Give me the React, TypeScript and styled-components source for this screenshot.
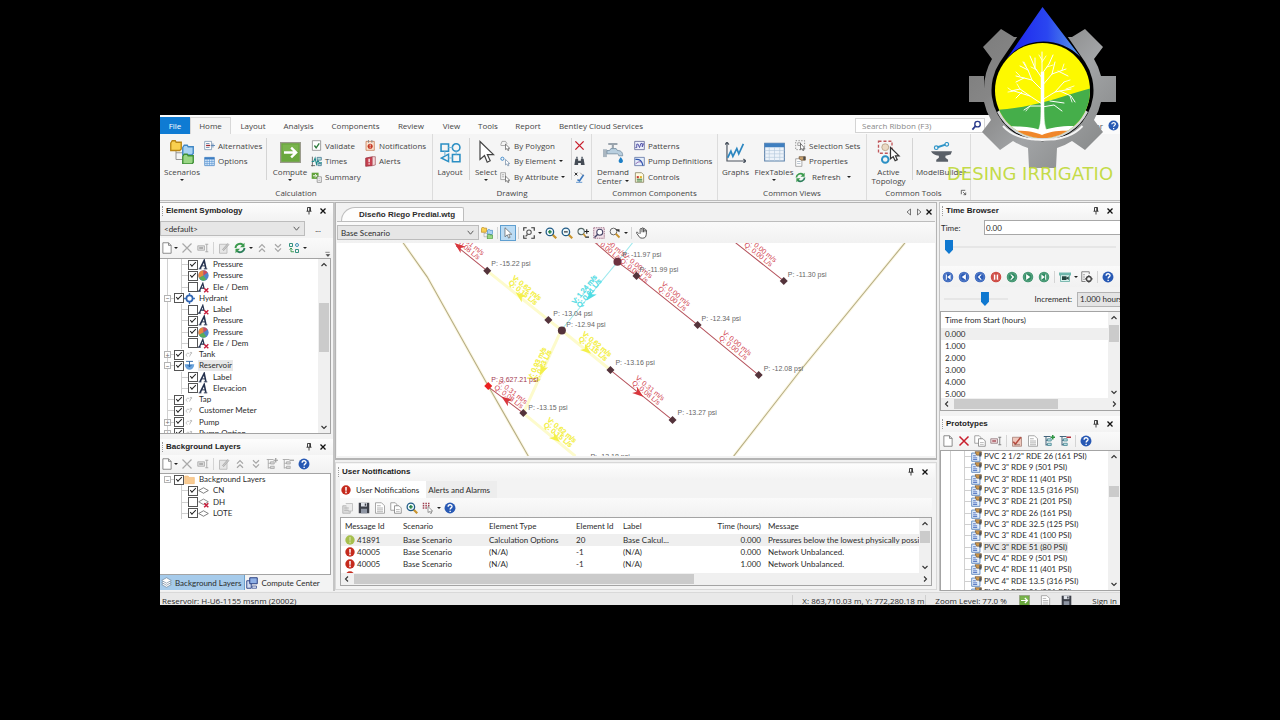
import React from "react";
import styled, { createGlobalStyle, css } from "styled-components";

const ui = `"Open Sans", "Noto Sans", sans-serif`;
const classic = `Lato, "Liberation Sans", sans-serif`;

const Global = createGlobalStyle`
  *, *::before, *::after { box-sizing: border-box; }
  body { margin: 0; background: #000; color: #2b2b2b; font: 8px/12px ${classic}; }
  button, input, select { font: inherit; color: inherit; margin: 0; }
  button { background: none; border: 0; padding: 0; }
`;

/* ---------- shell ---------- */

const Page = styled.div`
  min-height: 100vh;
  display: flex;
  flex-direction: column;
  justify-content: center;
  align-items: center;
  background: #000;
`;
const Frame = styled.div`
  position: relative;
  width: 75%;
`;
const AppWindow = styled.main`
  overflow: hidden;
  background: #f0f0f0;
`;
const Workspace = styled.div`
  display: grid;
  grid-template-columns: 175px minmax(0, 1fr) 183px;
  padding: 1px 0;
`;
const LeftDock = styled.aside`
  border-top: 1px solid #b4b4b4;
  border-right: 2px solid #c4c4c4;
  background: #f3f3f3;
`;
const RightDock = styled.aside`
  margin-left: 2px;
  border-top: 1px solid #b4b4b4;
  border-left: 1px solid #c4c4c4;
  background: #f3f3f3;
  overflow: hidden;
`;
const Centre = styled.section`
  min-width: 0;
`;

/* ---------- icons ---------- */

const Svg = styled.svg<{ $s: number }>`
  display: block;
  flex: none;
  width: ${(p) => p.$s}px;
  height: ${(p) => p.$s}px;
`;

const stroke = (c: string, w = 1.5) => ({ fill: "none", stroke: c, strokeWidth: w });
const disc = (c: string, d: string) => (
  <>
    <circle cx="8" cy="8" r="7" fill={c} />
    <circle cx="8" cy="8" r="5.5" fill="none" stroke="#fff" strokeOpacity=".35" />
    <path d={d} fill="#fff" />
  </>
);
const lens = (extra: React.ReactNode, c = "#1f5a86") => (
  <>
    <path d="M10 10l5 5" stroke="#c9942e" strokeWidth="3" />
    <circle cx="6.5" cy="6.5" r="5" fill="#eef8fb" stroke={c} strokeWidth="1.7" />
    {extra}
  </>
);
const folder = (x: number, y: number, f: string, s: string) => (
  <path d={`M${x} ${y + 1.5}l1-1.5h2l.6 1h3.4v4.500l-1 1H${x}z`} fill={f} stroke={s} strokeWidth=".9" />
);

const icons: Record<string, React.ReactNode> = {
  scenarios: (
    <>
      <path d="M4 7v6h5M4 8.500h5" {...stroke("#8b8b8b", 0.6)} />
      {folder(0.5, 0.5, "#f9d04f", "#b98616")}
      {folder(8.500, 3.5, "#a9d3f3", "#3f86c4")}
      {folder(8.500, 9.500, "#9ad685", "#3e8f36")}
    </>
  ),
  alternatives: (
    <>
      <path d="M1 2h10v12H1z" fill="#fff" stroke="#6a87a8" />
      <path d="M3 5h5M3 11h5" {...stroke("#7b98b7")} />
      <path d="M3 8h6" {...stroke("#9c2f38", 2)} />
      <path d="M10 8h6M13 5v6" {...stroke("#5b86b4", 1.3)} />
    </>
  ),
  options: (
    <>
      <path d="M1 2h14v12H1z" fill="#d6e8fa" stroke="#3c7cc0" />
      <path d="M1 3.500h14" {...stroke("#3c7cc0", 3)} />
      <path d="M1 8h14M1 11h14M4.500 4v10M8 4v10M11.500 4v10" {...stroke("#5c97d3", 0.9)} />
    </>
  ),
  compute: (
    <>
      <path d="M.5.5h15v15H.5z" fill="#6aa83e" stroke="#9b9b8d" />
      <path d="M2 2h12v5H2z" fill="#85bd58" opacity=".6" />
      <path d="M3 8h9M8.500 4.300L12.300 8l-3.800 3.700" {...stroke("#fff", 1.8)} />
    </>
  ),
  validate: (
    <>
      <path d="M2 1h12v14H2z" fill="#fff" stroke="#777" />
      <path d="M5 8l2.500 3.500L12 5" {...stroke("#2c7a3c", 2)} />
    </>
  ),
  times: (
    <>
      <path d="M2 1v14M0 14h6" {...stroke("#555", 1.2)} />
      <path d="M1 8h3l2-5 2 9 2-6 2 4h4" {...stroke("#1f8a8a", 1.6)} />
      <path d="M9 2h6v4H9zM10 11h5v3h-5z" fill="#b9dcd8" stroke="#2f6c8a" />
    </>
  ),
  summary: (
    <>
      <path d="M1 1h10v9H1z" fill="#62a23b" />
      <path d="M3 5.500h5M6 3l2.500 2.500L6 8" {...stroke("#fff", 1.4)} />
      <path d="M9 7h6v8H9z" fill="#fff" stroke="#777" />
      <path d="M10.500 10h3M10.500 12.500h3" {...stroke("#999", 1)} />
    </>
  ),
  notifications: (
    <>
      <path d="M1.500 2h12v13h-12z" fill="#fbe6d2" stroke="#c06a3e" />
      <path d="M5 0v4M10 0v4" {...stroke("#888", 1.4)} />
      <circle cx="7.500" cy="9" r="3.700" fill="#c63a24" />
      <path d="M7.500 6.500v3M7.500 10.500v1.200" {...stroke("#fff", 1.2)} />
    </>
  ),
  alerts: (
    <>
      <path d="M1 3l10-2v13L1 15z" fill="#c64150" stroke="#8f2633" />
      <path d="M11 1h4v12l-4 1" fill="#f3d6d8" stroke="#a0545c" />
      <path d="M6 4v5M6 10.500v2" {...stroke("#fff", 1.8)} />
    </>
  ),
  layout: (
    <>
      <path d="M.8 1.500h5.700V7H.8zM9.500 9.500h5.700V15H9.500z" {...stroke("#2b8fc4", 1.2)} />
      <circle cx="12.300" cy="4.200" r="2.900" {...stroke("#2b8fc4", 1.2)} />
      <path d="M6.500 9.300v5.700L1 12.200z" {...stroke("#2b8fc4", 1.1)} />
      <path d="M6.500 4.200h3M12.300 7v2.500M6.500 12.200h3M3.700 7v3.500" {...stroke("#7cb9da", 0.9)} />
    </>
  ),
  pointer: <path d="M4 1v12l3-2.600 1.800 4.400 2-1-1.900-4.100H13z" fill="#fff" stroke="#444" strokeWidth=".8" />,
  byPolygon: (
    <>
      <path d="M1 7l2-5h5l2 3-3 3H1" {...stroke("#8a8a8a", 1)} />
      <path d="M8 6v8l2-1.500 1.500 3 1.500-.8-1.300-2.700h2.500z" fill="#fff" stroke="#555" />
    </>
  ),
  byElement: (
    <>
      <circle cx="3.500" cy="4" r="2.300" {...stroke("#3b87c9", 1.4)} />
      <path d="M8 5v8l2-1.500 1.500 3 1.500-.8-1.300-2.700h2.500z" fill="#fff" stroke="#6c86a3" />
    </>
  ),
  byAttribute: (
    <>
      <path d="M1 1h7v10H1zM3 4h3M3 7h3" {...stroke("#8a8a8a", 1)} />
      <path d="M8 6v8l2-1.500 1.500 3 1.500-.8-1.300-2.700h2.500z" fill="#fff" stroke="#555" />
    </>
  ),
  redX: <path d="M2 2l12 12M14 2L2 14" {...stroke("#c81e2c", 2)} />,
  greyX: <path d="M2 2l12 12M14 2L2 14" {...stroke("#a9a9a9", 1.6)} />,
  binoculars: (
    <>
      <path d="M2 4h4v3h4V4h4l1.500 9H10v-3H6v3H.5z" fill="#454c55" />
      <path d="M3 1h2.500v3H3zM10.500 1H13v3h-2.500z" fill="#6a727c" />
    </>
  ),
  editCheck: (
    <>
      <path d="M1 1l4 4M5 1L1 5" {...stroke("#222", 1.4)} />
      <path d="M5 11l3 2 6-9" {...stroke("#3d78bd", 2.400)} />
      <path d="M3 15h9" {...stroke("#6a9bd0", 1.5)} />
      <path d="M9 1l4 4" {...stroke("#888", 1)} />
    </>
  ),
  faucet: (
    <>
      <path d="M4 1.500h7M7.500 1.500V5" {...stroke("#9aa4ad", 1.6)} />
      <path d="M0 5.500h3v6H0z" fill="#aab6c0" />
      <path d="M3 6.500h2l1-1.500h4l1 1.500c3 0 4 1.500 4 4h-3c0-1-.5-1.500-1.500-1.500H3z" fill="#b9cfdf" stroke="#70899c" strokeWidth=".6" />
      <path d="M13.500 11.500c1 1.500 1.700 2.200 1.700 3a1.600 1.500 0 0 1-3.300 0c0-.8.700-1.500 1.600-3z" fill="#1d7fc6" />
    </>
  ),
  patterns: (
    <>
      <path d="M1 2h14v12H1z" fill="#eef0fb" stroke="#4a4f86" />
      <path d="M2 11h2V6h2l2 5 2-6h2v5l2-5" {...stroke("#4343a0", 1.300)} />
    </>
  ),
  pump: (
    <>
      <path d="M1 2h14v12H1z" fill="#e6eefb" stroke="#4a5f96" />
      <path d="M2 5c6-1 10 2 11 9" {...stroke("#2d57b0", 1.800)} />
      <path d="M2 12c3-4 7-4 9-3" {...stroke("#7f4fa0", 1.200)} />
    </>
  ),
  controls: (
    <>
      <path d="M2 1h9l3 3v11H2z" fill="#fffbe0" stroke="#77724c" />
      <path d="M4 6h3v3H4z" fill="#c9342e" />
      <path d="M8.500 6h3v3h-3z" fill="#e0b32c" />
      <path d="M4 10.500h8M4 13h8" {...stroke("#3d7f45", 1.500)} />
    </>
  ),
  graphs: (
    <>
      <path d="M1.500 0v14.500H16M0 2l1.500-2L3 2M14 13l2 1.500-2 1.500" {...stroke("#4c5560", 0.9)} />
      <path d="M2 12l2.500-5 1.500 4 3-6 1.500 4L14 1.500" {...stroke("#2c86c0", 1.300)} />
    </>
  ),
  flex: (
    <>
      <path d="M.5 1h15v13.500H.5z" fill="#edf3fa" stroke="#5b81aa" strokeWidth=".8" />
      <path d="M.5 1h15v3H.5z" fill="#3f7fc0" />
      <path d="M.5 6.500h15M4 4v10.500M8 4v10.500M12 4v10.500M.5 9h15M.5 11.700h15" {...stroke("#b6cadd", 0.5)} />
    </>
  ),
  selection: (
    <>
      <path d="M1 1h13v13H1z" {...stroke("#666", 1)} strokeDasharray="2 2" />
      <path d="M4 4h4v4H4z" {...stroke("#888", 1)} />
      <path d="M8 5v9l2-1.500 1.500 3 1.500-.8-1.300-2.700h2.500z" fill="#fff" stroke="#444" />
    </>
  ),
  properties: (
    <>
      <path d="M1 4h9v11H1z" fill="#fff" stroke="#888" />
      <path d="M3 8h5M3 11h5" {...stroke("#9ab", 1)} />
      <path d="M6 1h9v5H9L6 4z" fill="#c9a26e" stroke="#6f5334" />
      <path d="M12 1h3v5h-3z" fill="#4c4c4c" />
    </>
  ),
  refresh: (
    <>
      <path d="M2 8a6 6 0 0 1 10-4" {...stroke("#3b9a4d", 2.500)} />
      <path d="M14 8a6 6 0 0 1-10 4" {...stroke("#2d7f5c", 2.500)} />
      <path d="M14 1v6H8zM2 15V9h6z" fill="#3b9a4d" />
    </>
  ),
  topology: (
    <>
      <path d="M1 .8h9v8H1z" {...stroke("#c0565a", 0.9)} strokeDasharray="2 1.300" />
      <circle cx="5.500" cy="4.800" r="2.300" fill="#ead9c4" stroke="#bba58a" strokeWidth=".6" />
      <circle cx="5.500" cy="13" r="2.200" {...stroke("#2b8fc4", 1.300)} />
      <path d="M9 5v7.500l1.800-1.400 1.300 2.700 1.400-.7-1.200-2.500h2.400z" fill="#fff" stroke="#333" strokeWidth=".8" />
    </>
  ),
  anvil: (
    <>
      <path d="M5 4l6-2" {...stroke("#2f95c8", 1.500)} />
      <circle cx="4" cy="4.300" r="1.400" {...stroke("#2f95c8", 0.9)} />
      <circle cx="12" cy="1.800" r="1.400" {...stroke("#2f95c8", 0.9)} />
      <path d="M0 7h16l-1 2.500-4 1v1.500l2 1.500V15H4v-1.500L6 12v-1.500C3 10 1 9 0 7z" fill="#5a6068" />
    </>
  ),
  search: (
    <>
      <circle cx="9.500" cy="6" r="4" {...stroke("#2a3b8c", 2)} />
      <path d="M6.500 9L2 14" {...stroke("#2a3b8c", 2.500)} />
    </>
  ),
  help: (
    <>
      <circle cx="8" cy="8" r="7.300" fill="#2859b4" />
      <path d="M5.500 6.300c0-3.500 5.200-3.300 5.200-.4 0 1.900-2.500 2-2.500 4M8.200 11.500v1.800" {...stroke("#fff", 1.800)} />
    </>
  ),
  launcher: <path d="M3 12V3h9M7 7l6 6M13 8v5H8" {...stroke("#333", 1.600)} />,
  doc: <path d="M2.500 1h7.500l3.500 3.500V15h-11zM10 1v3.500h3.500" fill="#fff" stroke="#777" strokeWidth="1.100" />,
  docLines: (
    <>
      <path d="M2 1h8l4 4v10H2z" fill="#fff" stroke="#8b8b8b" />
      <path d="M4 5h5M4 8h8M4 10.500h8M4 13h8" {...stroke("#9a9a9a", 1)} />
    </>
  ),
  copy: (
    <>
      <path d="M1 1h6l2 2v8H1z" fill="#fff" stroke="#888" />
      <path d="M6 5h6l3 3v7H6z" fill="#fff" stroke="#777" />
      <path d="M8 10h5M8 12.500h5" {...stroke("#aaa", 1)} />
    </>
  ),
  rename: (
    <>
      <path d="M1 5h9v6H1z" fill="#ddd" stroke="#a5a5a5" />
      <path d="M3 8h5" {...stroke("#999", 1.800)} />
      <path d="M11 3h4M11 13h4M13 3v10" {...stroke("#a5a5a5", 1.200)} />
    </>
  ),
  renameRed: (
    <>
      <path d="M1 5h9v6H1z" fill="#eed8da" stroke="#8d7479" />
      <path d="M3 8h5" {...stroke("#a34851", 1.800)} />
      <path d="M11 3h4M11 13h4M13 3v10" {...stroke("#777", 1.200)} />
    </>
  ),
  edit: (
    <>
      <path d="M2 3h10v12H2z" fill="#e6e6e6" stroke="#b0b0b0" />
      <path d="M6 10l7-8 1.500 1.500-7 8z" fill="#c9c9c9" stroke="#a5a5a5" />
    </>
  ),
  up2: <path d="M4 7.500l4-4 4 4M4 13l4-4 4 4" {...stroke("#a5a5a5", 1.600)} />,
  down2: <path d="M4 3l4 4 4-4M4 8.500l4 4 4-4" {...stroke("#a5a5a5", 1.600)} />,
  nodes: (
    <>
      <path d="M2 2h4v4H2zM10 10h4v4h-4z" {...stroke("#2e8f7c", 1.300)} />
      <circle cx="12" cy="4" r="2" {...stroke("#3d8fb4", 1.300)} />
      <path d="M4 8v5h4M2 10l2-2 2 2" {...stroke("#3c9a50", 1.300)} />
    </>
  ),
  overflow: <path d="M3 3h10M5 8h8l-4 4.500z" fill="#333" stroke="#555" strokeWidth="1.500" />,
  treeAdd: (
    <>
      <path d="M1 2h9M3 2v12M3 7h4M3 13h4" {...stroke("#a7a7a7", 1.200)} />
      <path d="M6 5h5v3H6zM6 11h5v3H6z" fill="#d5d5d5" stroke="#a5a5a5" />
      <path d="M13 0v6M10 3h6" {...stroke("#9c9c9c", 1.600)} />
    </>
  ),
  treeDel: (
    <>
      <path d="M1 2h9M3 2v12M3 7h4M3 13h4" {...stroke("#a7a7a7", 1.200)} />
      <path d="M6 5h5v3H6zM6 11h5v3H6z" fill="#d5d5d5" stroke="#a5a5a5" />
      <path d="M10 3h6" {...stroke("#9c9c9c", 1.600)} />
    </>
  ),
  treeAddC: (
    <>
      <path d="M1 2h9M4 2v12M4 7h4M4 13h4" {...stroke("#3f6178", 1.300)} />
      <path d="M6 5h5v3H6zM6 11h5v3H6z" fill="#bcdce0" stroke="#3f8390" />
      <path d="M13 0v6M10 3h6" {...stroke("#2d9443", 2)} />
    </>
  ),
  treeDelC: (
    <>
      <path d="M1 2h9M4 2v12M4 7h4M4 13h4" {...stroke("#3f6178", 1.300)} />
      <path d="M6 5h5v3H6zM6 11h5v3H6z" fill="#bcdce0" stroke="#3f8390" />
      <path d="M10 3h6" {...stroke("#b3313b", 2)} />
    </>
  ),
  stamp: (
    <>
      <path d="M2 3h12v12H2z" fill="#efc8bd" stroke="#a07a70" />
      <path d="M3 9l3 3 7-9" {...stroke("#b4483c", 2)} />
      <path d="M4 13h8" {...stroke("#8a6a60", 1)} />
    </>
  ),
  letterA: (
    <>
      <path d="M3 14L9 2l2.500 12" {...stroke("#25324f", 2.300)} />
      <path d="M5.500 10h5M1 14.300h4M8.500 14.300h5" {...stroke("#25324f", 1.400)} />
    </>
  ),
  letterAX: (
    <>
      <path d="M2 13L7 2l2 8M4 9h4M0 13.300h4" {...stroke("#25324f", 1.800)} />
      <path d="M9 9l6 6M15 9l-6 6" {...stroke("#c81e3c", 2)} />
    </>
  ),
  pie: (
    <>
      <circle cx="8" cy="8" r="7.500" fill="#4f86c9" />
      <path d="M8 8V.5A7.500 7.500 0 0 0 1.500 11.700z" fill="#e8883f" />
      <path d="M8 8L1.500 11.700A7.500 7.500 0 0 0 12 14.300z" fill="#58ad58" />
      <path d="M8 8V.5a7.500 7.500 0 0 1 6 3z" fill="#cf4a5a" />
    </>
  ),
  hydrant: (
    <>
      <path d="M8 0v16M0 8h16" {...stroke("#3f78c0", 2)} />
      <circle cx="8" cy="8" r="4.500" fill="#fff" stroke="#2d62b0" strokeWidth="2.500" />
    </>
  ),
  reservoir: (
    <>
      <path d="M1 6c1 11 13 11 14 0z" fill="#6aa3dc" />
      <path d="M3 2h10M8 2v8M5 7l3 3 3-3" {...stroke("#25609f", 1.300)} />
    </>
  ),
  faint: <path d="M5 11a2.500 2.500 0 1 1 3-3.500M8 11l3-6M8.500 5H11v2" {...stroke("#b5b5b5", 1.200)} />,
  folderPale: <path d="M1 3h5l1.500 2H15v9H1z" fill="#f9cb92" stroke="#f3bb78" />,
  layer: <path d="M1 8l7-4 7 4-7 4z" fill="#fff" stroke="#666" strokeWidth="1.200" />,
  layerX: (
    <>
      <path d="M1 7l7-4 7 4-7 4z" fill="#fff" stroke="#777" strokeWidth="1.200" />
      <path d="M9 9l6 6M15 9l-6 6" {...stroke("#c81e3c", 2.200)} />
    </>
  ),
  layers: (
    <>
      <path d="M1 11l7-4 7 4-7 4z" fill="#fff" stroke="#71889e" />
      <path d="M1 8l7-4 7 4-7 4z" fill="#fff" stroke="#71889e" />
      <path d="M1 5l7-4 7 4-7 4z" fill="#fff" stroke="#71889e" />
    </>
  ),
  computeCenter: (
    <>
      <path d="M1 5h6v10H1z" fill="#cfdaf0" stroke="#334a8c" strokeWidth="1.300" />
      <path d="M5 1h10v8H5z" fill="#8fb0e6" stroke="#263c80" strokeWidth="1.300" />
      <path d="M8 12h6v3H8z" fill="#dfe6f5" stroke="#334a8c" />
    </>
  ),
  extents: (
    <>
      <path d="M1 5V1h4M11 1h4v4M15 11v4h-4M5 15H1v-4" {...stroke("#333", 1.500)} />
      <circle cx="8" cy="7" r="3" {...stroke("#555", 1.400)} />
      <path d="M6 10l-2.500 2.500" {...stroke("#555", 1.800)} />
    </>
  ),
  zoomIn: lens(<path d="M6.500 4v5M4 6.500h5" stroke="#1b7a3c" strokeWidth="1.800" />),
  zoomOut: lens(<path d="M4 6.500h5" stroke="#333" strokeWidth="1.600" />),
  zoomPM: (
    <>
      <circle cx="5.500" cy="6" r="4.200" fill="#eef8fb" stroke="#566" strokeWidth="1.400" />
      <path d="M8.500 9l3 4" {...stroke("#c9942e", 2.200)} />
      <path d="M13 3v6M10 6h6M11 13.500h5" {...stroke("#222", 1.500)} />
    </>
  ),
  zoomWin: (
    <>
      <path d="M1 1h14v14H1z" fill="#f3e3ea" stroke="#8a4f6c" strokeDasharray="2 1" />
      <circle cx="9" cy="7" r="4" fill="#fff" stroke="#446" strokeWidth="1.400" />
      <path d="M6 10l-4 4" {...stroke("#446", 2)} />
    </>
  ),
  zoomPrev: (
    <>
      <circle cx="6" cy="6" r="4.500" fill="#f4f4f4" stroke="#666" strokeWidth="1.300" />
      <path d="M9 9l5 5" {...stroke("#c9942e", 2.400)} />
      <path d="M8 3h6v4z" fill="#333" />
    </>
  ),
  hand: (
    <path d="M4 9L2 7C1 6 0 7.500 1 8.500l4 5.500c1 1 6 1.500 7.500-.5 1-1.500 1.500-4 1.500-9 0-1-2-1-2 0V3c0-1.200-2-1.200-2 0V2C10 .7 8 .7 8 2v1C8 1.700 5.500 1.700 5.500 3v6M8 3v4M10 3v4M12 4v3" fill="#fff" stroke="#333" strokeWidth="1.100" />
  ),
  tray: (
    <>
      <path d="M1 5h10v10H1z" fill="#dcdcdc" stroke="#aaa" />
      <path d="M5 2h9v10H8" fill="#ececec" stroke="#b5b5b5" />
      <path d="M3 8h6M3 11h6" {...stroke("#b0b0b0", 1.300)} />
    </>
  ),
  save: (
    <>
      <path d="M1 1h14v14H1z" fill="#3c3f48" />
      <path d="M4 1h8v5H4z" fill="#dfe3ea" />
      <path d="M4 9h8v6H4z" fill="#8f96a4" />
      <path d="M9 2h2v3H9z" fill="#3c3f48" />
    </>
  ),
  selectDots: (
    <>
      <path d="M1 2h10M1 5h10M1 8h7" {...stroke("#a04050", 2)} strokeDasharray="2 1.500" />
      <path d="M8 6v8l2-1.500 1.500 3 1.500-.8-1.300-2.700h2.500z" fill="#fff" stroke="#777" />
    </>
  ),
  error: (
    <>
      <circle cx="8" cy="8" r="7.500" fill="#c52a1d" />
      <path d="M8 3v6M8 10.500v2.500" {...stroke("#fff", 2.400)} />
    </>
  ),
  warn: (
    <>
      <circle cx="8" cy="8" r="7.500" fill="#a6bf4c" />
      <path d="M8 3v6M8 10.500v2.500" {...stroke("#d6e0a0", 2)} />
    </>
  ),
  first: disc("#2c5cb8", "M5 4.500h1.500v7H5zM11.500 4.500v7L7 8z"),
  back: disc("#2c5cb8", "M10.500 4v8L5 8z"),
  stepBack: disc("#2c5cb8", "M10.500 4.500L7.500 8l3 3.500H8.500L5 8l3.500-3.500z"),
  pause: disc("#c8342c", "M5 4.500h2.200v7H5zM8.800 4.500H11v7H8.800z"),
  step: disc("#2f8b62", "M5.500 4.500L8.500 8l-3 3.500h2L11 8 7.500 4.500z"),
  play: disc("#2f8b62", "M5.500 4v8L11 8z"),
  last: disc("#2f8b62", "M9.500 4.500H11v7H9.500zM4.500 4.500v7L9 8z"),
  camera: (
    <>
      <path d="M0 2h16v4H0z" fill="#6fb9ae" />
      <path d="M2 5h12v9H2z" fill="#d8f0ec" stroke="#5aa79c" />
      <path d="M4 7h6v5H4zM10 9l3-2v5l-3-2z" fill="#24443f" />
    </>
  ),
  gearDoc: (
    <>
      <path d="M1 1h10v3M1 1v13h5M3 5h2M3 8h2M3 11h2" {...stroke("#777", 1.200)} />
      <circle cx="10.500" cy="10.500" r="3.200" {...stroke("#444", 1.800)} />
      <path d="M10.500 5.500v2M10.500 13.500v2M5.500 10.500h2M13.500 10.500h2" {...stroke("#444", 1.500)} />
    </>
  ),
  proto: (
    <>
      <path d="M1 3h12v12H1z" fill="#e6f0fb" stroke="#5b86bd" strokeWidth="1.300" />
      <path d="M3 7h4M3 10h6M3 12.500h6" {...stroke("#4a6ec0", 1.400)} />
      <path d="M6 1h9v5H8z" fill="#d09a4c" stroke="#6f5334" />
      <path d="M12 2h3v6h-3z" fill="#4b5560" />
    </>
  ),
  pin: <path d="M5 1h6v7M5 1v7M3 8.500h10M8 9v6M9.500 1v7" {...stroke("#222", 1.700)} />,
  close: <path d="M3 3l10 10M13 3L3 13" {...stroke("#111", 2.600)} />,
  prev: <path d="M11 2v12L4 8z" {...stroke("#444", 1.400)} />,
  next: <path d="M5 2v12l7-6z" {...stroke("#444", 1.400)} />,
  chevron: <path d="M3 5l5 6 5-6" {...stroke("#555", 1.700)} />,
  chevUp: <path d="M3 10l5-5 5 5" {...stroke("#333", 2.200)} />,
  chevDown: <path d="M3 6l5 5 5-5" {...stroke("#333", 2.200)} />,
  chevLeft: <path d="M10 3L5 8l5 5" {...stroke("#333", 2.200)} />,
  chevRight: <path d="M6 3l5 5-5 5" {...stroke("#333", 2.200)} />,
};

const Icon = ({ name, size = 12 }: { name: string; size?: number }) => (
  <Svg $s={size} viewBox="0 0 16 16" aria-hidden="true">
    {icons[name]}
  </Svg>
);

const Caret = styled.span`
  flex: none;
  border: 2px solid transparent;
  border-top-color: #222;
  border-bottom-width: 0;
`;

/* ---------- ribbon ---------- */

const TabStrip = styled.nav`
  display: flex;
  align-items: flex-end;
  height: 19px;
  padding-top: 2px;
  background: #fbfbfb;
  font-family: ${ui};
`;
const RibbonTab = styled.button<{ $kind?: "file" | "active"; $w: number }>`
  flex: 0 0 ${(p) => p.$w}px;
  height: 17px;
  white-space: nowrap;
  color: #444;
  ${(p) => p.$kind === "file" && css`background: #0f7bd3; color: #fff;`}
  ${(p) =>
    p.$kind === "active" &&
    css`
      background: #f5f5f5;
      border: 1px solid #d8d8d8;
      border-bottom: 0;
    `}
`;
const TabTools = styled.div`
  display: flex;
  align-items: center;
  margin-left: auto;
  height: 17px;
`;
const SearchBox = styled.label`
  display: flex;
  align-items: center;
  width: 130px;
  height: 15px;
  padding: 0 2px 0 6px;
  border: 1px solid #d4d4d4;
  background: #fff;
`;
const SearchInput = styled.input`
  flex: 1;
  min-width: 0;
  border: 0;
  padding: 0;
  background: none;
  outline: 0;
  &::placeholder { color: #888; opacity: 1; }
`;
const Account = styled.div`
  display: flex;
  align-items: center;
  justify-content: flex-end;
  gap: 5px;
  width: 135px;
  padding-right: 1px;
  color: #555;
`;
const RibbonBody = styled.div`
  display: flex;
  height: 67px;
  background: #f5f5f5;
  border-bottom: 1px solid #bdbdbd;
  font-family: ${ui};
`;
const Group = styled.section<{ $w: number }>`
  flex: 0 0 ${(p) => p.$w}px;
  display: flex;
  flex-direction: column;
  border-right: 1px solid #dcdcdc;
`;
const GroupItems = styled.div`
  display: flex;
  flex: 1;
  padding-top: 4px;
`;
const GroupLabel = styled.div`
  display: flex;
  justify-content: center;
  align-items: center;
  height: 13px;
  color: #444;
  margin-bottom: 1px;
`;
const LauncherSlot = styled.button`
  margin-right: 3px;
  margin-left: auto;
`;
const CenteredLabel = styled.span`
  flex: 1;
  text-align: center;
`;
const BigButton = styled.button<{ $w: number }>`
  flex: 0 0 ${(p) => p.$w}px;
  display: flex;
  flex-direction: column;
  align-items: center;
  padding-top: 2px;
  line-height: 9px;
  color: #444;
  white-space: nowrap;
`;
const BigIcon = styled.span`
  display: flex;
  align-items: center;
  height: 24px;
`;
const BigText = styled.span<{ $tall?: boolean }>`
  display: flex;
  flex-direction: column;
  align-items: center;
  gap: ${(p) => (p.$tall ? 0 : 3)}px;
  margin-top: 3px;
`;
const Inline = styled.span`
  display: flex;
  align-items: center;
  gap: 3px;
`;
const Divider = styled.span<{ $h?: number }>`
  flex: none;
  width: 1px;
  height: ${(p) => p.$h ?? 42}px;
  margin: 0 2px;
  background: #d4d4d4;
`;
const SmallColumn = styled.div<{ $w: number }>`
  flex: 0 0 ${(p) => p.$w}px;
  display: grid;
  grid-template-rows: repeat(3, 1fr);
  height: 47px;
`;
const SmallButton = styled.button<{ $gap?: number }>`
  display: flex;
  align-items: center;
  gap: ${(p) => p.$gap ?? 3}px;
  white-space: nowrap;
  color: #444;
`;

const Big = ({ icon, w, lines, caret, size = 21 }: { icon: string; w: number; lines: string[]; caret?: boolean; size?: number }) => (
  <BigButton $w={w}>
    <BigIcon>
      <Icon name={icon} size={size} />
    </BigIcon>
    <BigText $tall={lines.length > 1}>
      {lines.map((l, i) => (
        <Inline key={l}>
          {l}
          {caret && lines.length > 1 && i === lines.length - 1 && <Caret />}
        </Inline>
      ))}
      {caret && lines.length === 1 && <Caret />}
    </BigText>
  </BigButton>
);

const Small = ({ w, items }: { w: number; items: [string, string, boolean?][] }) => (
  <SmallColumn $w={w}>
    {items.map(([icon, text, caret]) => (
      <SmallButton key={icon} aria-label={text || icon} $gap={text === "Refresh" ? 6 : 3}>
        <Icon name={icon} size={11} />
        {text}
        {caret && <Caret />}
      </SmallButton>
    ))}
  </SmallColumn>
);

const tabs: [string, number, ("file" | "active")?][] = [
  ["File", 30, "file"],
  ["Home", 41, "active"],
  ["Layout", 44],
  ["Analysis", 47],
  ["Components", 67],
  ["Review", 44],
  ["View", 37],
  ["Tools", 36],
  ["Report", 44],
  ["Bentley Cloud Services", 102],
];

const Ribbon = () => (
  <header>
    <TabStrip>
      {tabs.map(([t, w, k]) => (
        <RibbonTab key={t} $w={w} $kind={k}>
          {t}
        </RibbonTab>
      ))}
      <TabTools>
        <SearchBox>
          <SearchInput placeholder="Search Ribbon (F3)" aria-label="Search Ribbon" />
          <Icon name="search" size={11} />
        </SearchBox>
        <Account>
          <span>Advisor</span>
          <Icon name="help" size={11} />
        </Account>
      </TabTools>
    </TabStrip>
    <RibbonBody>
      <Group $w={273}>
        <GroupItems>
          <Big icon="scenarios" w={44} lines={["Scenarios"]} caret size={24} />
          <Small w={60} items={[["alternatives", "Alternatives"], ["options", "Options"]]} />
          <Divider />
          <Big icon="compute" w={42} lines={["Compute"]} caret />
          <Small w={54} items={[["validate", "Validate"], ["times", "Times"], ["summary", "Summary"]]} />
          <Small w={64} items={[["notifications", "Notifications"], ["alerts", "Alerts"]]} />
        </GroupItems>
        <GroupLabel>Calculation</GroupLabel>
      </Group>
      <Group $w={159}>
        <GroupItems>
          <Big icon="layout" w={34} lines={["Layout"]} />
          <Divider />
          <Big icon="pointer" w={28} lines={["Select"]} caret size={24} />
          <Small w={69} items={[["byPolygon", "By Polygon"], ["byElement", "By Element", true], ["byAttribute", "By Attribute", true]]} />
          <Divider />
          <Small w={16} items={[["redX", ""], ["binoculars", ""], ["editCheck", ""]]} />
        </GroupItems>
        <GroupLabel>Drawing</GroupLabel>
      </Group>
      <Group $w={126}>
        <GroupItems>
          <Big icon="faucet" w={42} lines={["Demand", "Center"]} caret />
          <Small w={82} items={[["patterns", "Patterns"], ["pump", "Pump Definitions"], ["controls", "Controls"]]} />
        </GroupItems>
        <GroupLabel>Common Components</GroupLabel>
      </Group>
      <Group $w={149}>
        <GroupItems>
          <Big icon="graphs" w={35} lines={["Graphs"]} />
          <Big icon="flex" w={42} lines={["FlexTables"]} caret />
          <Small w={70} items={[["selection", "Selection Sets"], ["properties", "Properties"], ["refresh", "Refresh", true]]} />
        </GroupItems>
        <GroupLabel>Common Views</GroupLabel>
      </Group>
      <Group $w={104}>
        <GroupItems>
          <Big icon="topology" w={43} lines={["Active", "Topology"]} size={24} />
          <Divider />
          <Big icon="anvil" w={52} lines={["ModelBuilder"]} />
        </GroupItems>
        <GroupLabel>
          <CenteredLabel>Common Tools</CenteredLabel>
          <LauncherSlot aria-label="Common Tools options">
            <Icon name="launcher" size={7} />
          </LauncherSlot>
        </GroupLabel>
      </Group>
    </RibbonBody>
  </header>
);

/* ---------- shared panel parts ---------- */

const TitleBar = styled.header`
  display: flex;
  align-items: center;
  gap: 6px;
  height: 16px;
  padding: 0 6px 0 2px;
  background: linear-gradient(#fdfdfd, #f3f3f3);
`;
const Grip = styled.span`
  width: 2px;
  height: 10px;
  margin-right: -4px;
  border-left: 1px dotted #9c9c9c;
`;
const Title = styled.h2`
  flex: 1;
  margin: 0;
  font: bold 8px/12px "Liberation Sans", sans-serif;
  color: #1c1c1c;
`;
const Plain = styled.button`
  display: flex;
  align-items: center;
  justify-content: center;
`;
const PanelTitle = ({ text }: { text: string }) => (
  <TitleBar>
    <Grip />
    <Title>{text}</Title>
    <Plain aria-label="Pin">
      <Icon name="pin" size={8} />
    </Plain>
    <Plain aria-label="Close">
      <Icon name="close" size={8} />
    </Plain>
  </TitleBar>
);

const ToolBar = styled.div<{ $h: number }>`
  display: flex;
  align-items: center;
  height: ${(p) => p.$h}px;
  background: linear-gradient(#fafafa, #f1f1f1);
`;
const ToolButton = styled.button<{ $on?: boolean; $slim?: boolean }>`
  flex: none;
  display: flex;
  align-items: center;
  justify-content: center;
  width: ${(p) => (p.$slim ? 13 : 16)}px;
  height: 16px;
  ${(p) => p.$on && css`background: #bcdcf4; border: 1px solid #5f9fd0;`}
`;
const CaretButton = styled.button`
  flex: none;
  display: flex;
  align-items: center;
  justify-content: center;
  width: 6px;
  height: 16px;
`;
const Tools = ({ items }: { items: string[] }) => (
  <>
    {items.map((n, i) =>
      n === "|" ? (
        <Divider key={i} $h={12} />
      ) : n === "v" ? (
        <CaretButton key={i} aria-label="More">
          <Caret />
        </CaretButton>
      ) : (
        <ToolButton key={i} aria-label={n.replace("!", "")} $on={n.startsWith("!")} $slim={n === "doc" && items[i + 1] === "v"}>
          <Icon name={n.replace("!", "")} size={12} />
        </ToolButton>
      ),
    )}
  </>
);

const SelectWrap = styled.span<{ $w: number }>`
  display: grid;
  grid-template-columns: 1fr 10px;
  align-items: center;
  flex: 0 0 ${(p) => p.$w}px;
  height: 15px;
  padding: 0 2px 0 3px;
  border: 1px solid #bcbcbc;
  background: #e6e6e6;
`;
const Select = styled.select`
  grid-area: 1 / 1 / 2 / 3;
  appearance: none;
  border: 0;
  padding: 0;
  background: none;
  outline: 0;
`;
const SelectArrow = styled.span`
  grid-area: 1 / 2;
  pointer-events: none;
`;
const DropDown = ({ w, value, label }: { w: number; value: string; label: string }) => (
  <SelectWrap $w={w}>
    <Select aria-label={label} defaultValue={value}>
      <option>{value}</option>
    </Select>
    <SelectArrow>
      <Icon name="chevron" size={9} />
    </SelectArrow>
  </SelectWrap>
);

const Bar = styled.div<{ $x?: boolean }>`
  display: flex;
  flex: none;
  flex-direction: ${(p) => (p.$x ? "row" : "column")};
  align-items: stretch;
  ${(p) => (p.$x ? "height: 12px;" : "width: 12px;")}
  background: #f0f0f0;
`;
const BarButton = styled.button`
  flex: 0 0 12px;
  display: flex;
  align-items: center;
  justify-content: center;
`;
const Thumb = styled.span<{ $grow: number }>`
  flex: ${(p) => p.$grow} 1 0;
  margin: 1px;
  background: #cbcbcb;
`;
const Rest = styled.span<{ $grow: number }>`
  flex: ${(p) => p.$grow} 1 0;
`;
const ScrollBar = ({ x, parts }: { x?: boolean; parts: [number, number, number] }) => (
  <Bar $x={x}>
    <BarButton aria-label="Scroll back">
      <Icon name={x ? "chevLeft" : "chevUp"} size={8} />
    </BarButton>
    <Rest $grow={parts[0]} />
    <Thumb $grow={parts[1]} />
    <Rest $grow={parts[2]} />
    <BarButton aria-label="Scroll forward">
      <Icon name={x ? "chevRight" : "chevDown"} size={8} />
    </BarButton>
  </Bar>
);

const Box = styled.div<{ $h: number }>`
  display: flex;
  height: ${(p) => p.$h}px;
  border: 1px solid #a4a4a4;
  background: #fff;
  overflow: hidden;
`;
const TreeBox = styled(Box)`
  margin-right: 2px;
  border-left: 0;
`;

/* ---------- trees ---------- */

const TreeList = styled.ul<{ $h: number }>`
  flex: 1;
  min-width: 0;
  display: grid;
  grid-auto-rows: 1fr;
  height: ${(p) => p.$h}px;
  margin: 0;
  padding: 0;
  list-style: none;
`;
const TreeRow = styled.li`
  display: flex;
  align-items: center;
  min-height: 0;
  white-space: nowrap;
`;
const Guide = styled.span<{ $line?: boolean; $tee?: boolean; $lead?: number }>`
  align-self: stretch;
  flex: none;
  display: flex;
  align-items: center;
  width: 14px;
  margin-left: ${(p) => p.$lead ?? 0}px;
  background-image:
    linear-gradient(90deg, transparent 7px, ${(p) => (p.$line ? "#d0d0d0" : "transparent")} 7px, ${(p) => (p.$line ? "#d0d0d0" : "transparent")} 8px, transparent 8px),
    linear-gradient(90deg, transparent 7px, ${(p) => (p.$tee ? "#d0d0d0" : "transparent")} 7px);
  background-size: 100% 100%, 100% 1px;
  background-position: 0 0, 0 50%;
  background-repeat: no-repeat;
`;
const Expander = styled.button`
  width: 7px;
  height: 7px;
  margin-left: 4px;
  border: 1px solid #b4b4b4;
  background: #fff;
  font-size: 7px;
  line-height: 4px;
  color: #666;
`;
const Check = styled.input`
  appearance: none;
  flex: none;
  width: 10px;
  height: 10px;
  border: 1px solid #555;
  background: #fff;
  &:checked::before {
    content: "";
    display: block;
    width: 6px;
    height: 3px;
    margin: 1px;
    border: solid #222;
    border-width: 0 0 1px 1px;
    transform: rotate(-45deg);
  }
`;
const NodeLabel = styled.label<{ $sel?: boolean }>`
  display: flex;
  align-items: center;
  height: 11px;
  line-height: 11px;
  margin-left: 3px;
  padding: 0 1px;
  background: ${(p) => (p.$sel ? "#e8e8e8" : "none")};
`;

type Node = { depth: 0 | 1; text: string; icon: string; on?: boolean; exp?: "+" | "−"; sel?: boolean; noTrunk?: boolean };

const TreeNodes = ({ nodes, id, h }: { nodes: Node[]; id: string; h: number }) => (
  <TreeList $h={h}>
    {nodes.map((n, i) => (
      <TreeRow key={i}>
        <Guide $line={!n.noTrunk} $tee={n.depth === 0}>
          {n.exp && <Expander aria-label={`Toggle ${n.text}`}>{n.exp}</Expander>}
        </Guide>
        {n.depth === 1 && <Guide $line $tee />}
        <Check type="checkbox" id={`${id}${i}`} defaultChecked={n.on} />
        <Icon name={n.icon} size={11} />
        <NodeLabel htmlFor={`${id}${i}`} $sel={n.sel}>
          {n.text}
        </NodeLabel>
      </TreeRow>
    ))}
  </TreeList>
);

const symbology: Node[] = [
  { depth: 1, text: "Pressure", icon: "letterA", on: true },
  { depth: 1, text: "Pressure", icon: "pie", on: true },
  { depth: 1, text: "Ele / Dem", icon: "letterAX" },
  { depth: 0, text: "Hydrant", icon: "hydrant", on: true, exp: "−" },
  { depth: 1, text: "Label", icon: "letterAX" },
  { depth: 1, text: "Pressure", icon: "letterA", on: true },
  { depth: 1, text: "Pressure", icon: "pie", on: true },
  { depth: 1, text: "Ele / Dem", icon: "letterAX" },
  { depth: 0, text: "Tank", icon: "faint", on: true, exp: "+" },
  { depth: 0, text: "Reservoir", icon: "reservoir", on: true, exp: "−", sel: true },
  { depth: 1, text: "Label", icon: "letterA", on: true },
  { depth: 1, text: "Elevacion", icon: "letterA", on: true },
  { depth: 0, text: "Tap", icon: "faint", on: true },
  { depth: 0, text: "Customer Meter", icon: "faint", on: true },
  { depth: 0, text: "Pump", icon: "faint", on: true, exp: "+" },
  { depth: 0, text: "Pump Option", icon: "faint", on: true, exp: "+" },
];
const layers: Node[] = [
  { depth: 0, text: "Background Layers", icon: "folderPale", on: true, exp: "−", noTrunk: true },
  { depth: 1, text: "CN", icon: "layer", on: true, noTrunk: true },
  { depth: 1, text: "DH", icon: "layerX", noTrunk: true },
  { depth: 1, text: "LOTE", icon: "layer", on: true, noTrunk: true },
];

const ComboRow = styled.div`
  display: flex;
  align-items: center;
  height: 19px;
`;
const Ellipsis = styled.button`
  width: 26px;
  height: 15px;
`;
const OverflowSlot = styled.span`
  align-self: flex-end;
  margin-left: auto;
  margin-right: 2px;
`;
const DockTabs = styled.div`
  display: flex;
  height: 15px;
`;
const DockTab = styled.button<{ $on?: boolean }>`
  display: flex;
  align-items: center;
  gap: 3px;
  padding: 0 3px 0 1px;
  border-right: ${(p) => (p.$on ? "1px solid #6ba0cd" : "0")};
  background: ${(p) => (p.$on ? "#a6cbeb" : "none")};
  white-space: nowrap;
`;
const Spacer = styled.div<{ $h: number }>`
  height: ${(p) => p.$h}px;
`;

const Left = () => (
  <LeftDock>
    <PanelTitle text="Element Symbology" />
    <ComboRow>
      <DropDown w={145} value="<default>" label="Symbology definition" />
      <Ellipsis>...</Ellipsis>
    </ComboRow>
    <ToolBar $h={20}>
      <Tools items={["doc", "v", "greyX", "rename", "|", "edit", "refresh", "v", "up2", "down2", "nodes", "v"]} />
      <OverflowSlot>
        <Icon name="overflow" size={7} />
      </OverflowSlot>
    </ToolBar>
    <TreeBox $h={176}>
      <TreeNodes nodes={symbology} id="s" h={180} />
      <ScrollBar parts={[30, 48, 66]} />
    </TreeBox>
    <Spacer $h={5} />
    <PanelTitle text="Background Layers" />
    <ToolBar $h={18}>
      <Tools items={["doc", "v", "greyX", "rename", "|", "edit", "up2", "down2", "treeAdd", "treeDel", "help"]} />
    </ToolBar>
    <TreeBox $h={102}>
      <TreeNodes nodes={layers} id="b" h={45} />
    </TreeBox>
    <DockTabs>
      <DockTab $on>
        <Icon name="layers" size={11} />
        Background Layers
      </DockTab>
      <DockTab>
        <Icon name="computeCenter" size={12} />
        Compute Center
      </DockTab>
    </DockTabs>
  </LeftDock>
);

/* ---------- drawing ---------- */

const DocPanel = styled.section`
  border: solid #b4b4b4;
  border-width: 1px 1px 2px 1px;
  padding: 0 1px 2px;
  background: #f3f3f3;
`;
const DocTabs = styled.div`
  display: flex;
  align-items: flex-end;
  height: 19px;
  padding-left: 4px;
  border-bottom: 1px solid #bdbdbd;
  background: #f1f1f1;
`;
const DocTab = styled.button`
  height: 14px;
  padding: 0 8px 0 17px;
  border: 1px solid #bdbdbd;
  border-bottom: 0;
  border-radius: 14px 2px 0 0;
  background: #fdfdfd;
  font: bold 8px/12px "Liberation Sans", sans-serif;
  white-space: nowrap;
`;
const DocNav = styled.div`
  display: flex;
  align-items: center;
  gap: 2px;
  height: 18px;
  margin-left: auto;
  padding-right: 2px;
`;
const Map = styled.svg`
  display: block;
  width: 100%;
  height: 213px;
  background: #fff;
`;

const mapText = { fontFamily: "Liberation Sans, sans-serif", fontSize: 7 };

const PipeLabel = ({ x, y, a, v, q, c, bold }: { x: number; y: number; a: number; v: string; q: string; c: string; bold?: boolean }) => (
  <g transform={`translate(${x} ${y}) rotate(${a})`} fill={c} stroke={bold ? c : "none"} strokeWidth=".4" textAnchor="middle" {...mapText}>
    <text y="-8">{v}</text>
    <text y="-2">{q}</text>
  </g>
);
const Arrow = ({ x, y, a, c }: { x: number; y: number; a: number; c: string }) => (
  <path transform={`translate(${x} ${y}) rotate(${a})`} d="M-6 0L5-4 2 0 5 4z" fill={c} />
);
const Junction = ({ x, y, c = "#54333b" }: { x: number; y: number; c?: string }) => (
  <path d={`M${x - 4} ${y}l2-2 2-2 2 2 2 2-2 2-2 2-2-2z`} fill={c} />
);

const pressures: [number, number, string, string?][] = [
  [491, 266, "P: -15.22 psi"],
  [622, 257, "P: -11.97 psi"],
  [639, 272, "P: -11.99 psi"],
  [787, 277, "P: -11.30 psi"],
  [701, 321, "P: -12.34 psi"],
  [763, 371, "P: -12.08 psi"],
  [677, 415, "P: -13.27 psi"],
  [615, 365, "P: -13.16 psi"],
  [553, 316, "P: -13.04 psi"],
  [566, 327, "P: -12.94 psi"],
  [491, 382, "P: 3,627.21 psi", "#a33a50"],
  [528, 410, "P: -13.15 psi"],
  [590, 459, "P: -13.18 psi"],
];
const red = "#d0404c";
const yellow = "#f4f04a";

const Drawing = () => (
  <Map viewBox="337 243 597 213" preserveAspectRatio="xMidYMid slice" role="img" aria-label="Network drawing">
    <g fill="none">
      <path d="M403 243l24 34 61 109 40 70M904 243L800 370l-67 86" stroke="#fbf6e2" strokeWidth="3" />
      <path d="M403 243l24 34 61 109 40 70M904 243L800 370l-67 86" stroke="#b3ab80" strokeWidth="1" />
      <path d="M487 271l61 49 13 10 49 40M561 330l-38 83 52 43" stroke="#fdfbcc" strokeWidth="3" />
      <path d="M632 243l-15 19-56 68" stroke="#9fe9ee" strokeWidth="1" />
      <path d="M456 246l31 25M595 243l22 19 19 14 61 49 61 50M735 243l48 38M610 370l62 50M523 413l-36-27" stroke="#b5525c" strokeWidth="1" />
    </g>
    <PipeLabel x={463} y={251} a={39} v="V: 0.31 m/s" q="Q: 0.08 L/s" c={red} />
    <PipeLabel x={520} y={296} a={39} v="V: 0.62 m/s" q="Q: 0.15 L/s" c={yellow} bold />
    <PipeLabel x={590} y={352} a={39} v="V: 0.62 m/s" q="Q: 0.15 L/s" c={yellow} bold />
    <PipeLabel x={555} y={438} a={39} v="V: 0.62 m/s" q="Q: 0.15 L/s" c={yellow} bold />
    <PipeLabel x={546} y={368} a={-65} v="V: 0.93 m/s" q="Q: 0.23 L/s" c={yellow} bold />
    <PipeLabel x={592} y={296} a={-51} v="V: 1.24 m/s" q="Q: 0.61 L/s" c="#58dde5" bold />
    <PipeLabel x={604} y={252} a={39} v="V: 0.00 m/s" q="Q: 0.00 L/s" c={red} />
    <PipeLabel x={631} y={274} a={39} v="V: 0.00 m/s" q="Q: 0.00 L/s" c={red} />
    <PipeLabel x={669} y={302} a={39} v="V: 0.00 m/s" q="Q: 0.00 L/s" c={red} />
    <PipeLabel x={730} y={351} a={39} v="V: 0.00 m/s" q="Q: 0.00 L/s" c={red} />
    <PipeLabel x={755} y={258} a={39} v="V: 0.00 m/s" q="Q: 0.00 L/s" c={red} />
    <PipeLabel x={643} y={396} a={39} v="V: 0.31 m/s" q="Q: 0.08 L/s" c={red} />
    <PipeLabel x={506} y={400} a={37} v="V: 0.31 m/s" q="Q: 0.08 L/s" c={red} />
    <Arrow x={459} y={247} a={39} c="#d8363c" />
    <Arrow x={520} y={296} a={39} c={yellow} />
    <Arrow x={586} y={350} a={219} c={yellow} />
    <Arrow x={555} y={438} a={219} c={yellow} />
    <Arrow x={542} y={370} a={-65} c={yellow} />
    <Arrow x={590} y={296} a={-51} c="#4fdce4" />
    <Arrow x={638} y={393} a={219} c="#d8363c" />
    <Arrow x={506} y={400} a={37} c="#d8363c" />
    <g {...mapText}>
      {pressures.map(([x, y, t, c]) => (
        <text key={t} x={x} y={y} fill={c ?? "#666"}>
          {t}
        </text>
      ))}
    </g>
    <Junction x={487} y={271} />
    <Junction x={548} y={320} />
    <Junction x={610} y={370} />
    <Junction x={636} y={276} />
    <Junction x={697} y={325} />
    <Junction x={758} y={375} />
    <Junction x={783} y={281} />
    <Junction x={672} y={420} />
    <Junction x={523} y={413} />
    <Junction x={488} y={386} c="#ea2020" />
    <circle cx="617" cy="262" r="4" fill="#6d3340" />
    <circle cx="561.500" cy="330.500" r="4" fill="#54333b" />
  </Map>
);

/* ---------- notifications ---------- */

const NotifPanel = styled.section`
  margin-top: 2px;
  padding: 0 4px 3px 4px;
  background: #f3f3f3;
  border: 1px solid #d8d8d8;
`;
const SubTabs = styled.div`
  display: flex;
  height: 17px;
`;
const SubTab = styled.button<{ $on?: boolean }>`
  display: flex;
  align-items: center;
  gap: 5px;
  padding: 0 7px 0 ${(p) => (p.$on ? 1 : 2)}px;
  background: ${(p) => (p.$on ? "#fff" : "#ededed")};
  white-space: nowrap;
`;
const TableBox = styled.div`
  border: 1px solid #a4a4a4;
  background: #fff;
`;
const TableArea = styled.div<{ $h: number }>`
  display: flex;
  height: ${(p) => p.$h}px;
  overflow: hidden;
`;
const TableClip = styled.div`
  flex: 1;
  min-width: 0;
  overflow: hidden;
`;
const Table = styled.table`
  width: 100%;
  table-layout: fixed;
  border-collapse: collapse;
  td, th {
    height: 12px;
    padding: 0 3px 0 4px;
    line-height: 12px;
    font-weight: normal;
    text-align: left;
    white-space: nowrap;
    overflow: hidden;
  }
  th { height: 16px; }
  tbody tr:first-child { background: #efefef; }
`;
const Col = styled.col<{ $w?: number }>`
  ${(p) => p.$w && `width: ${p.$w}px;`}
`;
const NumTh = styled.th`
  && { text-align: right; }
`;
const NumTd = styled.td`
  && { text-align: right; }
`;
const IdCell = styled.span`
  display: flex;
  align-items: center;
  gap: 2px;
`;
const HeadPad = styled.div`
  padding: 1px 0;
  margin: 0 -3px 0 -4px;
`;

const messages = [
  ["41891", "Base Scenario", "Calculation Options", "20", "Base Calcul...", "0.000", "Pressures below the lowest physically possible"],
  ["40005", "Base Scenario", "(N/A)", "-1", "(N/A)", "0.000", "Network Unbalanced."],
  ["40005", "Base Scenario", "(N/A)", "-1", "(N/A)", "1.000", "Network Unbalanced."],
  ["40005", "Base Scenario", "(N/A)", "-1", "(N/A)", "1.000", "Network Unbalanced."],
];

const CentreColumn = () => (
  <Centre>
    <DocPanel>
      <DocTabs>
        <DocTab>Diseño Riego Predial.wtg</DocTab>
        <DocNav>
          <Plain aria-label="Previous"><Icon name="prev" size={8} /></Plain>
          <Plain aria-label="Next"><Icon name="next" size={8} /></Plain>
          <Plain aria-label="Close"><Icon name="close" size={8} /></Plain>
        </DocNav>
      </DocTabs>
      <ToolBar $h={21}>
        <DropDown w={142} value="Base Scenario" label="Scenario" />
        <Tools items={["scenarios", "|", "!pointer", "|", "extents", "v", "zoomIn", "zoomOut", "zoomPM", "zoomWin", "zoomPrev", "v", "|", "hand"]} />
      </ToolBar>
      <Drawing />
    </DocPanel>
    <NotifPanel>
      <HeadPad>
        <PanelTitle text="User Notifications" />
      </HeadPad>
      <SubTabs>
        <SubTab $on>
          <Icon name="error" size={10} />
          User Notifications
        </SubTab>
        <SubTab>Alerts and Alarms</SubTab>
      </SubTabs>
      <ToolBar $h={19}>
        <Tools items={["tray", "save", "docLines", "copy", "zoomIn", "selectDots", "v", "help"]} />
      </ToolBar>
      <TableBox>
        <TableArea $h={55}>
          <TableClip>
            <Table>
              <colgroup>
                <Col $w={58} />
                <Col $w={86} />
                <Col $w={87} />
                <Col $w={47} />
                <Col $w={60} />
                <Col $w={85} />
                <Col />
              </colgroup>
              <thead>
                <tr>
                  <th>Message Id</th>
                  <th>Scenario</th>
                  <th>Element Type</th>
                  <th>Element Id</th>
                  <th>Label</th>
                  <NumTh>Time (hours)</NumTh>
                  <th>Message</th>
                </tr>
              </thead>
              <tbody>
                {messages.map((m, i) => (
                  <tr key={i}>
                    <td>
                      <IdCell>
                        <Icon name={i ? "error" : "warn"} size={10} />
                        {m[0]}
                      </IdCell>
                    </td>
                    <td>{m[1]}</td>
                    <td>{m[2]}</td>
                    <td>{m[3]}</td>
                    <td>{m[4]}</td>
                    <NumTd>{m[5]}</NumTd>
                    <td>{m[6]}</td>
                  </tr>
                ))}
              </tbody>
            </Table>
          </TableClip>
          <ScrollBar parts={[0, 13, 18]} />
        </TableArea>
        <ScrollBar x parts={[0, 340, 224]} />
      </TableBox>
    </NotifPanel>
  </Centre>
);

/* ---------- right dock ---------- */

const TimeRow = styled.div`
  display: flex;
  align-items: center;
  height: 17px;
  padding-left: 1px;
`;
const TimeLabel = styled.label`
  flex: 0 0 43px;
`;
const TimeInput = styled.input`
  flex: 1;
  min-width: 0;
  height: 15px;
  padding: 0 1px;
  border: 1px solid #a8a8a8;
  border-right: 0;
  background: #fff;
`;
const SliderRow = styled.div`
  height: 30px;
  padding: 4px 4px 0 5px;
`;
const Range = styled.input<{ $w?: number }>`
  appearance: none;
  display: block;
  width: ${(p) => (p.$w ? `${p.$w}px` : "100%")};
  height: 14px;
  background: linear-gradient(transparent 6px, #e6e6e6 6px, #e6e6e6 8px, transparent 8px);
  &::-webkit-slider-thumb {
    appearance: none;
    width: 8px;
    height: 14px;
    background: #0f78d0;
    clip-path: polygon(0 0, 100% 0, 100% 70%, 50% 100%, 0 70%);
  }
`;
const SpeedRow = styled.div`
  display: flex;
  align-items: center;
  height: 24px;
  padding-left: 4px;
`;
const IncLabel = styled.label`
  margin-left: auto;
  margin-right: 5px;
`;
const IncSelect = styled.select`
  appearance: none;
  width: 43px;
  height: 15px;
  padding: 0 0 0 2px;
  border: 1px solid #b4b4b4;
  border-right: 0;
  background: #e4e4e4;
`;
const TimeBox = styled(TableBox)`
  border-right: 0;
`;
const ProtoBox = styled(Box)`
  border-right: 0;
`;
const ProtoLabel = styled.span<{ $sel?: boolean }>`
  margin-left: 1px;
  padding: 0 1px;
  line-height: 11px;
  background: ${(p) => (p.$sel ? "#e8e8e8" : "none")};
`;

const prototypes = [
  `PVC 2 1/2" RDE 26 (161 PSI)`,
  `PVC 3" RDE 9 (501 PSI)`,
  `PVC 3" RDE 11 (401 PSI)`,
  `PVC 3" RDE 13.5 (316 PSI)`,
  `PVC 3" RDE 21 (201 PSI)`,
  `PVC 3" RDE 26 (161 PSI)`,
  `PVC 3" RDE 32.5 (125 PSI)`,
  `PVC 3" RDE 41 (100 PSI)`,
  `PVC 3" RDE 51 (80 PSI)`,
  `PVC 4" RDE 9 (501 PSI)`,
  `PVC 4" RDE 11 (401 PSI)`,
  `PVC 4" RDE 13.5 (316 PSI)`,
  `PVC 4" RDE 21 (201 PSI)`,
];

const Right = () => (
  <RightDock>
    <PanelTitle text="Time Browser" />
    <TimeRow>
      <TimeLabel htmlFor="time">Time:</TimeLabel>
      <TimeInput id="time" defaultValue="0.00" />
    </TimeRow>
    <SliderRow>
      <Range type="range" aria-label="Time position" defaultValue={0} />
    </SliderRow>
    <ToolBar $h={21}>
      <Tools items={["first", "back", "stepBack", "pause", "step", "play", "last", "|", "camera", "v", "gearDoc", "|", "help"]} />
    </ToolBar>
    <SpeedRow>
      <Range type="range" aria-label="Speed" $w={64} defaultValue={66} />
      <IncLabel htmlFor="inc">Increment:</IncLabel>
      <IncSelect id="inc">
        <option>1.000 hours</option>
      </IncSelect>
    </SpeedRow>
    <TimeBox>
      <TableArea $h={86}>
        <TableClip>
          <Table>
            <thead>
              <tr>
                <th>Time from Start (hours)</th>
              </tr>
            </thead>
            <tbody>
              {["0.000", "1.000", "2.000", "3.000", "4.000", "5.000"].map((t) => (
                <tr key={t}>
                  <td>{t}</td>
                </tr>
              ))}
            </tbody>
          </Table>
        </TableClip>
        <ScrollBar parts={[0, 18, 44]} />
      </TableArea>
      <ScrollBar x parts={[0, 105, 50]} />
    </TimeBox>
    <Spacer $h={5} />
    <PanelTitle text="Prototypes" />
    <ToolBar $h={18}>
      <Tools items={["doc", "redX", "copy", "renameRed", "|", "stamp", "docLines", "treeAddC", "treeDelC", "|", "help"]} />
    </ToolBar>
    <ProtoBox $h={141}>
      <TreeList $h={147}>
        {prototypes.map((p) => (
          <TreeRow key={p}>
            <Guide $line $lead={2} />
            <Guide $line $tee />
            <Icon name="proto" size={11} />
            <ProtoLabel $sel={p.includes("(80 PSI)")}>{p}</ProtoLabel>
          </TreeRow>
        ))}
      </TreeList>
      <ScrollBar parts={[22, 12, 81]} />
    </ProtoBox>
  </RightDock>
);

/* ---------- status bar ---------- */

const StatusBar = styled.footer`
  display: flex;
  align-items: flex-start;
  height: 13px;
  padding: 2px 3px 0 2px;
  overflow: hidden;
  background: #e9e9e9;
  border-top: 1px solid #d9d9d9;
  font-family: ${ui};
  white-space: nowrap;
`;
const StatusText = styled.span`
  flex: 1;
`;
const StatusCell = styled.span<{ $w: number }>`
  flex: 0 0 ${(p) => p.$w}px;
  padding-left: 9px;
  border-left: 1px solid #cfcfcf;
`;
const StatusIcons = styled.span`
  display: flex;
  gap: 10px;
  flex: 0 0 73px;
`;

/* ---------- brand mark over the window corner ---------- */

const Brand = styled.svg`
  position: absolute;
  top: -115px;
  right: 0;
  width: 180px;
  height: 200px;
  pointer-events: none;
`;

const BrandMark = () => (
  <Brand viewBox="940 0 180 200" role="img" aria-label="Desing Irrigation">
    <defs>
      <linearGradient id="steel" gradientUnits="userSpaceOnUse" x1="972" y1="30" x2="1112" y2="150">
        <stop offset="0" stopColor="#7b7b7b" />
        <stop offset=".3" stopColor="#868686" />
        <stop offset=".6" stopColor="#a2a4a6" />
        <stop offset="1" stopColor="#858787" />
      </linearGradient>
      <linearGradient id="water" x1="0" y1="0" x2="1" y2="0">
        <stop offset="0" stopColor="#1c22ee" />
        <stop offset=".55" stopColor="#2a46f0" />
        <stop offset="1" stopColor="#5b9be8" />
      </linearGradient>
      <clipPath id="disc">
        <circle cx="1042.500" cy="90.500" r="47.500" />
      </clipPath>
    </defs>
    <path
      d="M984 89a59 59 0 0 1 8-30l-9-12 18-18 13 8 58 0 13-8 18 18-9 12a59 59 0 0 1 7 17h15v26h-15a59 59 0 0 1-7 18l9 12-18 18-13-9a59 59 0 0 1-15 7l-1 20h-27l-1-20a59 59 0 0 1-15-7l-13 9-18-18 9-12a59 59 0 0 1-7-18h-15V76h15z"
      fill="url(#steel)"
    />
    <path d="M1042.500 0L1000 62a51 51 0 1 0 85 0z" fill="#000" />
    <path d="M997 112a51 51 0 0 0 91 0l-6-4h-79z" fill="#d4d6d6" />
    <path d="M1042.500 7l-36 52c20-24 54-22 74-2z" fill="url(#water)" />
    <g clipPath="url(#disc)">
      <path d="M994 40h98v100h-98z" fill="#fdf900" />
      <path d="M994 110c20-1 34-4 50-8 16-4 30-9 48-14v54h-98z" fill="#45ae4a" />
      <path d="M994 126c18 1 36-1 48 5 12-5 28-6 50-4v16h-98z" fill="#fff" />
      <path d="M1008 131c14-1 26 0 34 4 8-4 18-5 36-4v10h-70z" fill="#f0872b" />
    </g>
    <path d="M1003 126c10 11 24 14 39.500 14s30-3 40-14" fill="none" stroke="#f4f4f4" strokeWidth="2" />
    <g fill="none" stroke="#fff" strokeLinecap="round">
      <path d="M1038 131c3-6 3-12 3-32V72h3v27c0 20 0 26 3 32z" fill="#fff" strokeWidth=".5" />
      <path
        d="M1042 76V52M1042 104l-12-8-16-5M1030 96l-10-7-9 2M1022 92l-6 6M1042 100l13-8 16-3M1055 92l9-10M1060 91l11 5 4 6M1042 90l-10-10-16-4M1032 80l-4-10-8-4M1042 86l10-12 14-5M1052 74l3-12M1042 78l-7-10-5-12M1042 74l7-10 4-9M1024 78l-8 4M1058 71l10 5M1050 101l14 2M1042 106l-12 0-6 4M1042 107l12-2 8 6M1028 70l-5-8M1035 68v-10"
        strokeWidth="1"
      />
      <path
        d="M1020 89l-3-5M1014 91l-6 1M1066 89l8-3M1064 82l6-2M1042 60l-3-5M1042 62l4-6M1026 66l-2-4M1062 70l2-6M1047 67l6-2M1037 70l-6-3M1020 76l-4-4M1070 96l2 6M1012 91l-4-3M1030 106l-4 5"
        strokeWidth=".8"
      />
    </g>
    <text x="947" y="180" fontFamily="DejaVu Sans, sans-serif" fontSize="18" fill="#bdd831" fillOpacity=".9">
      DESING IRRIGATIO
    </text>
  </Brand>
);

export default function App() {
  return (
    <Page>
      <Global />
      <Frame>
        <AppWindow>
          <Ribbon />
          <Workspace>
            <Left />
            <CentreColumn />
            <Right />
          </Workspace>
          <StatusBar>
            <StatusText>Reservoir: H-U6-1155 msnm (20002)</StatusText>
            <StatusCell $w={133}>X: 863,710.03 m, Y: 772,280.18 m</StatusCell>
            <StatusCell $w={94}>Zoom Level: 77.0 %</StatusCell>
            <StatusIcons>
              <Icon name="compute" size={11} />
              <Icon name="docLines" size={11} />
              <Icon name="save" size={11} />
            </StatusIcons>
            <span>Sign in</span>
          </StatusBar>
        </AppWindow>
        <BrandMark />
      </Frame>
    </Page>
  );
}
